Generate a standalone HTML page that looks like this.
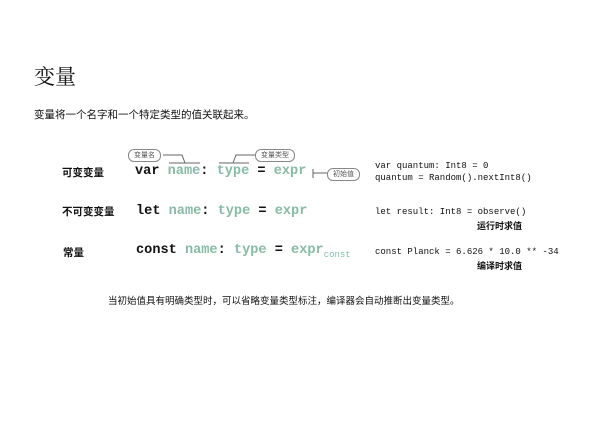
<!DOCTYPE html><html><head><meta charset="utf-8"><style>
body{margin:0;width:599px;height:424px;background:#fff;position:relative;font-family:"Liberation Sans","Noto Sans CJK SC",sans-serif;color:#111;overflow:hidden}
.a{position:absolute;white-space:nowrap}
.c{font-family:"Liberation Mono",monospace;font-weight:bold;font-size:13.6px}
.g{color:#86bca5}
.s{font-family:"Liberation Mono",monospace;font-size:9px;line-height:12px}
.lb{font-size:10.5px;font-weight:bold}
.tag{position:absolute;border:1px solid #888;border-radius:6px;font-size:7px;color:#555;padding:0 5px;height:11px;line-height:11px;background:#fff}
</style></head><body>
<div class="a" style="left:34px;top:61px;font-size:21px;font-family:'Noto Serif CJK SC',serif">变量</div>
<div class="a" style="left:34px;top:107px;font-size:10.5px">变量将一个名字和一个特定类型的值关联起来。</div>
<div class="a lb" style="left:62px;top:165px">可变变量</div>
<div class="a lb" style="left:62px;top:204px">不可变变量</div>
<div class="a lb" style="left:63px;top:245px">常量</div>
<div class="a c" style="left:135px;top:164px">var <span class="g">name</span>: <span class="g">type</span> = <span class="g">expr</span></div>
<div class="a c" style="left:136px;top:204px">let <span class="g">name</span>: <span class="g">type</span> = <span class="g">expr</span></div>
<div class="a c" style="left:136px;top:243px">const <span class="g">name</span>: <span class="g">type</span> = <span class="g">expr<sub style="font-size:9px;font-weight:normal;vertical-align:-4px">const</sub></span></div>
<svg class="a" style="left:0;top:0" width="599" height="200"><g fill="none" stroke="#666" stroke-width="1">
<path d="M163 155H182L185 163M169 163H200"/><path d="M219 163H249M233 163L236 155H256"/>
<path d="M313 169V178M313 173H327"/></g></svg>
<div class="tag" style="left:128px;top:149px">变量名</div>
<div class="tag" style="left:255px;top:149px">变量类型</div>
<div class="tag" style="left:327px;top:168px">初始值</div>
<div class="a s" style="left:375px;top:160px">var quantum: Int8 = 0<br>quantum = Random().nextInt8()</div>
<div class="a s" style="left:375px;top:206px">let result: Int8 = observe()</div>
<div class="a lb" style="left:477px;top:219px;font-size:9px">运行时求值</div>
<div class="a s" style="left:375px;top:246px">const Planck = 6.626 * 10.0 ** -34</div>
<div class="a lb" style="left:477px;top:259px;font-size:9px">编译时求值</div>
<div class="a" style="left:108px;top:293px;font-size:9.5px">当初始值具有明确类型时，可以省略变量类型标注，编译器会自动推断出变量类型。</div>
</body></html>
